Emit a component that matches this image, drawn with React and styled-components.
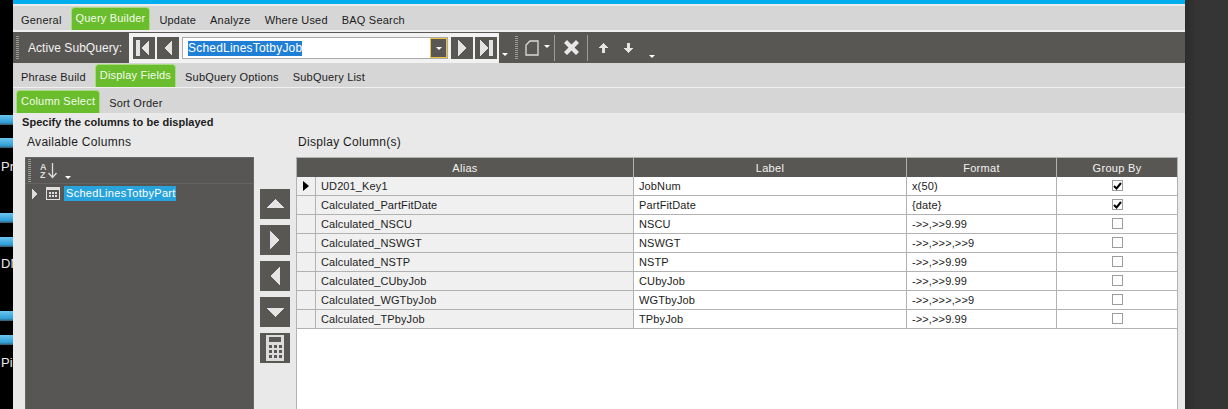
import React from "react";
import styled, { createGlobalStyle } from "styled-components";

const Global = createGlobalStyle`
  html, body { margin: 0; padding: 0; width: 1228px; height: 409px; overflow: hidden; background: #000; }
  body { font-family: "Liberation Sans", Arial, sans-serif; font-size: 11px; letter-spacing: .2px; color: #1c1c1c; }
`;

const DARK = "#595754";
const ICON = "#e4e4e4";

const Page = styled.div`display: flex; width: 1228px; height: 409px; overflow: hidden;`;

const Desktop = styled.div`width: 13px; flex: none; background: #000; overflow: hidden; display: flex; flex-direction: column; padding-top: 115px; box-sizing: border-box;`;
const DeskBar = styled.div`
  height: 10px; flex: none; margin-top: ${p => p.$mt}px;
  background: linear-gradient(#6cc5ee, #2f9ed6 75%, #3b5566);
`;
const DeskLabel = styled.div`
  color: #e8e8e8; font-size: 13px; height: 15px; flex: none; margin-top: ${p => p.$mt}px; white-space: nowrap; padding-left: 1px; letter-spacing: 0;
`;

const Win = styled.div`width: 1172px; flex: none; display: flex; flex-direction: column; background: #e9e9e9; overflow: hidden;`;
const Side = styled.div`flex: 1; background: linear-gradient(90deg, #2c2c2c, #353535 12px);`;
const TopBar = styled.div`height: 4px; background: #00aeef; flex: none;`;
const TopGap = styled.div`height: 2px; background: #ececec; flex: none;`;

const TabRow = styled.div`
  display: flex; align-items: flex-end; flex: none; background: #d6d6d6; box-sizing: border-box;
  height: ${p => p.$h}px; padding-left: 1px; border-bottom: ${p => p.$line}px solid #f0f0f0;
`;
const Tab = styled.div`
  box-sizing: border-box; height: 23px; white-space: nowrap; display: flex; align-items: center;
  ${p => p.$active ? `
    background: #6abd2c; color: #f4fbec; padding: 0 4px 2px; margin: 0 2px;
    border: 1px solid #a8dc80; border-bottom: none; border-radius: 4px 4px 0 0;
  ` : `
    padding: 2px 7px 0; color: #1c1c1c;
  `}
`;

const Toolbar = styled.div`
  height: 31px; flex: none; background: ${DARK}; display: flex; align-items: center;
`;
const Grip = styled.div`
  width: 3px; height: 23px; flex: none; margin-left: ${p => p.$ml}px;
  background: repeating-linear-gradient(#9a9a98 0 1px, ${DARK} 1px 2px);
`;
const ToolLabel = styled.div`color: #f2f2f2; font-size: 12px; margin-left: 9px; width: 101px; white-space: nowrap; letter-spacing: .05px;`;
const NavBox = styled.div`
  width: 370px; height: 30px; margin-top: 1px; flex: none; background: #f2f2f2; display: flex; align-items: center; padding-left: 4px; box-sizing: border-box;
`;
const NavBtn = styled.div`
  width: 22px; height: 22px; flex: none; background: ${DARK}; margin-left: ${p => p.$ml || 0}px; display: flex; align-items: center; justify-content: center;
`;
const Combo = styled.div`
  width: 266px; height: 22px; flex: none; margin-left: 3px; background: #fff; border: 1px solid #a9a9a9; box-sizing: border-box; display: flex; align-items: center; padding-left: 5px;
`;
const ComboText = styled.span`background: #1f7fd6; color: #fff; font-size: 12px; line-height: 15px; letter-spacing: .2px; white-space: nowrap; margin-top: 1px;`;
const ComboDrop = styled.div`
  margin-left: auto; width: 17px; height: 20px; box-sizing: border-box; background: ${DARK}; border: 1px solid #f0c040; display: flex; align-items: center; justify-content: center;
`;
const Caret = styled.div`
  width: 0; height: 0; flex: none; border-left: 3px solid transparent; border-right: 3px solid transparent; border-top: 3px solid #fff;
  margin-left: ${p => p.$ml || 0}px; margin-top: ${p => p.$mt || 0}px;
`;
const ToolSep = styled.div`width: 1px; height: 26px; background: #9b9b98; flex: none; margin-left: ${p => p.$ml}px;`;
const ToolIcon = styled.svg`flex: none; margin-left: ${p => p.$ml}px; display: block;`;

const Hint = styled.div`font-weight: bold; height: 18px; line-height: 18px; padding-left: 9px; flex: none; letter-spacing: .04px;`;

const Panes = styled.div`flex: 1; display: flex; min-height: 0; padding-left: 12px;`;
const LeftPane = styled.div`width: 229px; flex: none; display: flex; flex-direction: column;`;
const PaneTitle = styled.div`
  height: 26px; flex: none; font-size: 12px; line-height: 22px; padding-left: ${p => p.$pl}px; white-space: nowrap; letter-spacing: .3px;
`;
const Tree = styled.div`flex: 1; background: #575655; display: flex; flex-direction: column; border: 1px solid #686866; border-bottom: none;`;
const TreeBar = styled.div`
  height: 26px; flex: none; border-bottom: 1px solid #646462; display: flex; align-items: center; box-sizing: border-box; padding-left: 2px;
`;
const TreeRow = styled.div`height: 15px; margin-top: 2px; display: flex; align-items: center; padding-left: 6px;`;
const TreeLabel = styled.span`
  background: #29a3dc; color: #fff; height: 15px; line-height: 15px; margin-left: 4px; padding: 0 0 0 2px; white-space: nowrap; letter-spacing: .3px;
`;
const Movers = styled.div`
  width: 42px; flex: none; padding: 58px 0 0 6px; box-sizing: border-box; display: flex; flex-direction: column; gap: 6px;
`;
const MoveBtn = styled.div`width: 30px; height: 30px; background: ${DARK}; display: flex; align-items: center; justify-content: center;`;
const RightPane = styled.div`width: 882px; flex: none; display: flex; flex-direction: column;`;

const Grid = styled.div`flex: 1; background: #fff; border: 1px solid #b2b2b2; border-bottom: none; letter-spacing: .12px;`;
const GridRow = styled.div`
  display: grid; grid-template-columns: 19px 318px 273px 150px 120px; height: 19px; box-sizing: border-box;
`;
const HeadCell = styled.div`
  background: ${DARK}; color: #f2f2f2; text-align: center; line-height: 20px; height: 19px; box-sizing: border-box; letter-spacing: .3px;
  border-right: 1px solid #b2b2b2; grid-column: ${p => p.$span ? "span 2" : "auto"};
  &:last-child { border-right: none; }
`;
const Cell = styled.div`
  box-sizing: border-box; height: 19px; border-right: 1px solid #b2b2b2; border-bottom: 1px solid #b2b2b2; padding-bottom: 1px;
  white-space: nowrap; overflow: hidden; background: ${p => p.$shade ? "#f0f0f0" : "#fff"}; display: flex; align-items: center;
  justify-content: ${p => p.$center ? "center" : "flex-start"};
  padding-left: ${p => p.$center ? 0 : 5}px;
  &:last-child { border-right: none; }
`;
const Check = styled.div`
  width: 9px; height: 9px; border: 1px solid #9c9c9c; background: #fff; display: flex; align-items: center; justify-content: center;
`;

const Tri = ({ d, size = 22, fill = ICON }) => (
  <svg width={size} height={size} viewBox={`0 0 ${size} ${size}`} shapeRendering="crispEdges">
    <path d={d} fill={fill} />
  </svg>
);

const rows = [
  ["UD201_Key1", "JobNum", "x(50)", true, true],
  ["Calculated_PartFitDate", "PartFitDate", "{date}", true],
  ["Calculated_NSCU", "NSCU", "->>,>>9.99"],
  ["Calculated_NSWGT", "NSWGT", "->>,>>>,>>9"],
  ["Calculated_NSTP", "NSTP", "->>,>>9.99"],
  ["Calculated_CUbyJob", "CUbyJob", "->>,>>9.99"],
  ["Calculated_WGTbyJob", "WGTbyJob", "->>,>>>,>>9"],
  ["Calculated_TPbyJob", "TPbyJob", "->>,>>9.99"],
];

export default function App() {
  return (
    <Page>
      <Global />
      <Desktop>
        <DeskBar $mt={0} />
        <DeskBar $mt={13} />
        <DeskLabel $mt={11}>Pr</DeskLabel>
        <DeskBar $mt={39} />
        <DeskBar $mt={14} />
        <DeskLabel $mt={9}>DN</DeskLabel>
        <DeskBar $mt={40} />
        <DeskBar $mt={14} />
        <DeskLabel $mt={10}>Pi</DeskLabel>
      </Desktop>
      <Win>
        <TopBar />
        <TopGap />
        <TabRow $h={26} $line={2}>
          <Tab>General</Tab>
          <Tab $active>Query Builder</Tab>
          <Tab>Update</Tab>
          <Tab>Analyze</Tab>
          <Tab>Where Used</Tab>
          <Tab>BAQ Search</Tab>
        </TabRow>
        <Toolbar>
          <Grip $ml={3} />
          <ToolLabel>Active SubQuery:</ToolLabel>
          <NavBox>
            <NavBtn><Tri d="M3 3h4v16H3zM8 11l8-8v16z" /></NavBtn>
            <NavBtn $ml={2}><Tri d="M7 11l8-8v16z" /></NavBtn>
            <Combo>
              <ComboText>SchedLinesTotbyJob</ComboText>
              <ComboDrop><Caret /></ComboDrop>
            </Combo>
            <NavBtn $ml={3}><Tri d="M7 3l8 8-8 8z" /></NavBtn>
            <NavBtn $ml={2}><Tri d="M5 3l8 8-8 8zM14 3h4v16h-4z" /></NavBtn>
          </NavBox>
          <Caret $ml={3} $mt={14} />
          <Grip $ml={7} />
          <ToolIcon $ml={7} width="14" height="16" viewBox="0 0 14 16">
            <path d="M5 1h8v14H1V5z" fill="none" stroke="#dcdcdc" strokeWidth="1.3" />
          </ToolIcon>
          <Caret $ml={5} $mt={-2} />
          <ToolSep $ml={4} />
          <ToolIcon $ml={9} width="15" height="15" viewBox="0 0 15 15">
            <path d="M3 0l4.500 4.500L12 0l3 3-4.500 4.500L15 12l-3 3-4.500-4.500L3 15l-3-3 4.500-4.500L0 3z" fill="#e8e8e8" />
          </ToolIcon>
          <ToolSep $ml={8} />
          <ToolIcon $ml={11} width="9" height="10" viewBox="0 0 9 10" shapeRendering="crispEdges">
            <path d="M4.500 0L9 5H6v5H3V5H0z" fill={ICON} />
          </ToolIcon>
          <ToolIcon $ml={16} width="9" height="10" viewBox="0 0 9 10" shapeRendering="crispEdges">
            <path d="M3 0h3v5h3l-4.500 5L0 5h3z" fill={ICON} />
          </ToolIcon>
          <Caret $ml={16} $mt={17} />
        </Toolbar>
        <TabRow $h={25} $line={1}>
          <Tab>Phrase Build</Tab>
          <Tab $active>Display Fields</Tab>
          <Tab>SubQuery Options</Tab>
          <Tab>SubQuery List</Tab>
        </TabRow>
        <TabRow $h={25} $line={0}>
          <Tab $active>Column Select</Tab>
          <Tab>Sort Order</Tab>
        </TabRow>
        <Hint>Specify the columns to be displayed</Hint>
        <Panes>
          <LeftPane>
            <PaneTitle $pl={2}>Available Columns</PaneTitle>
            <Tree>
              <TreeBar>
                <Grip $ml={0} />
                <ToolIcon $ml={9} width="18" height="17" viewBox="0 0 18 17">
                  <text x="0" y="8" fontSize="9" fontWeight="bold" fill="#dcdcdc" fontFamily="Liberation Sans">A</text>
                  <text x="0" y="16" fontSize="9" fontWeight="bold" fill="#dcdcdc" fontFamily="Liberation Sans">Z</text>
                  <path d="M12.500 1v14M8.500 11l4 4.500 4-4.500" fill="none" stroke="#dcdcdc" strokeWidth="1.300" />
                </ToolIcon>
                <Caret $ml={7} $mt={14} />
              </TreeBar>
              <TreeRow>
                <ToolIcon $ml={0} width="6" height="10" viewBox="0 0 6 10" shapeRendering="crispEdges">
                  <path d="M0 0l6 5-6 5z" fill="#dcdcdc" />
                </ToolIcon>
                <ToolIcon $ml={8} width="14" height="13" viewBox="0 0 14 13" shapeRendering="crispEdges">
                  <path d="M.500.500h13v12H.500z" fill="none" stroke="#e0e0e0" />
                  <path d="M0 0h14v3H0zM3 5h2v2H3zM6 5h2v2H6zM9 5h2v2H9zM3 8h2v2H3zM6 8h2v2H6zM9 8h2v2H9z" fill="#e0e0e0" />
                </ToolIcon>
                <TreeLabel>SchedLinesTotbyPart</TreeLabel>
              </TreeRow>
            </Tree>
          </LeftPane>
          <Movers>
            <MoveBtn><Tri size={18} d="M9 4l9 9H0z" /></MoveBtn>
            <MoveBtn><Tri size={20} d="M5 1l10 9-10 9z" /></MoveBtn>
            <MoveBtn><Tri size={20} d="M15 1L5 10l10 9z" /></MoveBtn>
            <MoveBtn><Tri size={18} d="M0 5h18l-9 9z" /></MoveBtn>
            <MoveBtn>
              <svg width="20" height="26" viewBox="0 0 20 26" shapeRendering="crispEdges">
                <path d="M1 0h18v26H1z" fill="#dcdcdc" />
                <path d="M4 2h12v5H4zM4 10h3v3H4zM9 10h3v3H9zM14 10h3v3h-3zM4 15h3v3H4zM9 15h3v3H9zM14 15h3v3h-3zM4 20h3v3H4zM9 20h3v3H9zM14 20h3v3h-3z" fill={DARK} />
              </svg>
            </MoveBtn>
          </Movers>
          <RightPane>
            <PaneTitle $pl={2}>Display Column(s)</PaneTitle>
            <Grid>
              <GridRow>
                <HeadCell $span>Alias</HeadCell>
                <HeadCell>Label</HeadCell>
                <HeadCell>Format</HeadCell>
                <HeadCell>Group By</HeadCell>
              </GridRow>
              {rows.map(([a, l, f, g, cur]) => (
                <GridRow key={a}>
                  <Cell $shade $center>
                    {cur && <svg width="6" height="10" viewBox="0 0 6 10"><path d="M0 0l6 5-6 5z" fill="#000" /></svg>}
                  </Cell>
                  <Cell $shade>{a}</Cell>
                  <Cell>{l}</Cell>
                  <Cell>{f}</Cell>
                  <Cell $center>
                    <Check>
                      {g && <svg width="9" height="8" viewBox="0 0 9 8"><path d="M1 4l2.500 2.500L8 1" fill="none" stroke="#000" strokeWidth="2" /></svg>}
                    </Check>
                  </Cell>
                </GridRow>
              ))}
            </Grid>
          </RightPane>
        </Panes>
      </Win>
      <Side />
    </Page>
  );
}
